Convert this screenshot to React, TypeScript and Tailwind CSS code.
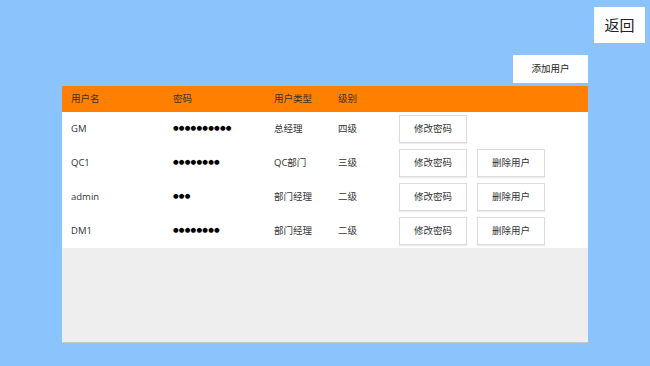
import React from "react";

const rows = [
  { name: "GM", pwd: "●●●●●●●●●●", type: "总经理", level: "四级", del: false },
  { name: "QC1", pwd: "●●●●●●●●", type: "QC部门", level: "三级", del: true },
  { name: "admin", pwd: "●●●", type: "部门经理", level: "二级", del: true },
  { name: "DM1", pwd: "●●●●●●●●", type: "部门经理", level: "二级", del: true },
];

const font = { fontFamily: '"Open Sans", "Noto Sans CJK SC", sans-serif' };

function Btn({ children }: { children: React.ReactNode }) {
  return (
    <div className="w-[68px] h-[28px] flex items-center justify-center bg-white border border-[#dcdcdc] shadow-[0_1px_1px_rgba(0,0,0,0.08)] text-[9.5px] text-[#333]">
      {children}
    </div>
  );
}

export default function App() {
  return (
    <div
      className="w-[650px] h-[366px] bg-[#8bc4fd] flex flex-col overflow-hidden"
      style={font}
    >
      <div className="flex justify-end pt-[7px] pr-[5px]">
        <div className="w-[51px] h-[36px] bg-white flex items-center justify-center text-[15px] text-[#222]">
          返回
        </div>
      </div>
      <div className="flex justify-end pr-[62px] mt-[12px]">
        <div className="w-[75px] h-[28px] bg-white flex items-center justify-center text-[9.5px] text-[#222]">
          添加用户
        </div>
      </div>
      <div className="ml-[62px] mt-[3px] w-[526px] h-[257px] flex flex-col bg-[#eeeeee] border-b border-[#c8c8c8]">
        <div className="h-[26px] bg-[#ff8000] grid grid-cols-[102px_101px_64px_61px] pl-[9px] items-center text-[9.5px] text-[#333]">
          <div>用户名</div>
          <div>密码</div>
          <div>用户类型</div>
          <div>级别</div>
        </div>
        <div className="bg-white">
          {rows.map((r) => (
            <div
              key={r.name}
              className="h-[34px] grid grid-cols-[102px_101px_64px_61px_78px_68px] pl-[9px] items-center text-[9.5px] text-[#333]"
            >
              <div>{r.name}</div>
              <div
                className="text-[6.5px] tracking-[0.2px] text-black"
                style={{ fontFamily: '"DejaVu Sans", sans-serif' }}
              >
                {r.pwd}
              </div>
              <div>{r.type}</div>
              <div>{r.level}</div>
              <Btn>修改密码</Btn>
              {r.del ? <Btn>删除用户</Btn> : <div />}
            </div>
          ))}
        </div>
      </div>
    </div>
  );
}
